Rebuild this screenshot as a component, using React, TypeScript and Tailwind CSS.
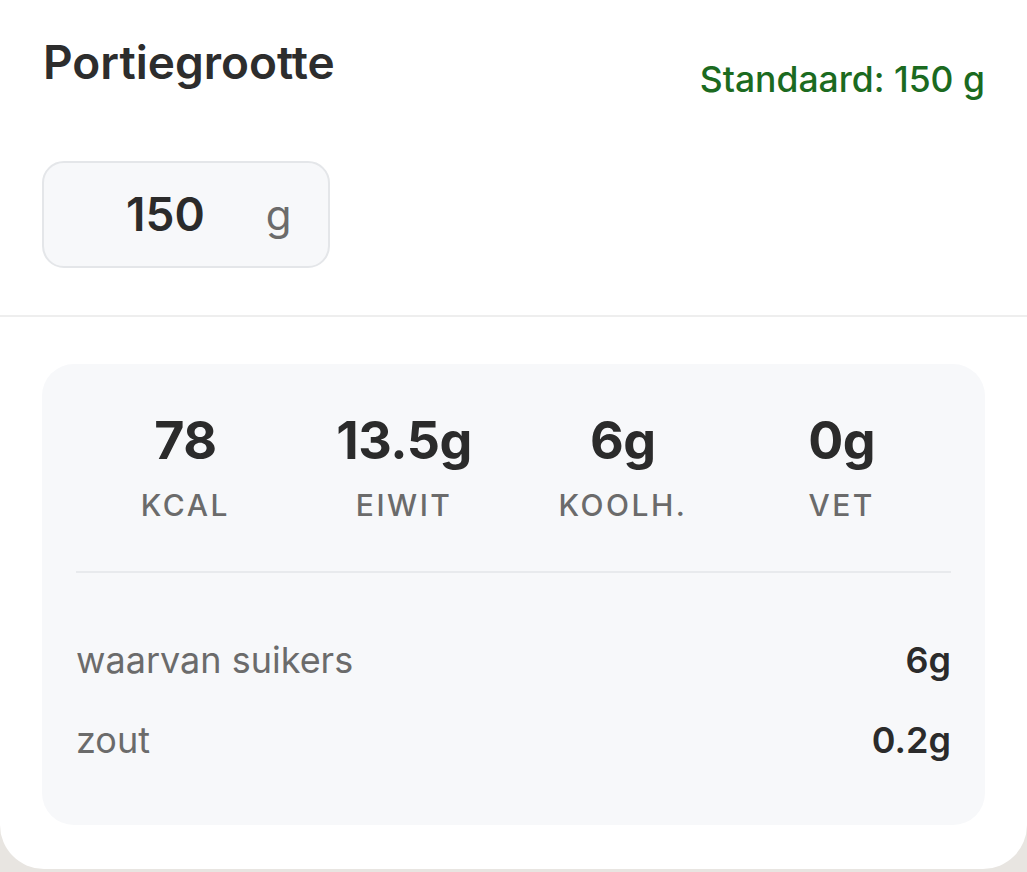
import React from "react";

const font = { fontFamily: "Inter, 'Noto Sans', sans-serif" };

function Macro({ value, label }: { value: string; label: string }) {
  return (
    <div className="flex flex-col items-center">
      <div className="text-[52px] leading-[56px] font-bold text-[#2b2b2b] tracking-[-0.5px]">{value}</div>
      <div className="mt-[18px] text-[30px] leading-[36px] font-medium tracking-[2.5px] text-[#6b6b6b]">{label}</div>
    </div>
  );
}

export default function App() {
  return (
    <div className="h-[872px] w-[1027px] bg-[#e8e5e1] overflow-hidden" style={font}>
      <div className="h-[869px] bg-white rounded-b-[44px] flex flex-col">
        <div className="flex items-start justify-between pl-[43px] pr-[42px] pt-[36px]">
          <div className="text-[46px] leading-[52px] font-semibold text-[#2d2d2d]">Portiegrootte</div>
          <div className="mt-[23px] text-[35.5px] leading-[42px] font-medium text-[#1b6a20]">Standaard: 150 g</div>
        </div>
        <div className="pl-[42px] mt-[60px]">
          <div className="w-[288px] h-[107px] rounded-[22px] border-2 border-[#e4e6e9] bg-[#f7f8fa] flex items-center pl-[82px]">
            <span className="text-[46px] font-semibold text-[#2b2b2b]">150</span>
            <span className="ml-[61px] text-[42px] text-[#6b6b6b]">g</span>
          </div>
        </div>
        <div className="mt-[47px] border-t-2 border-[#eeeeee]" />
        <div className="mx-[42px] mt-[47px] rounded-[32px] bg-[#f7f8fa] px-[34px] pt-[49px] pb-[63px]">
          <div className="grid grid-cols-4">
            <Macro value="78" label="KCAL" />
            <Macro value="13.5g" label="EIWIT" />
            <Macro value="6g" label="KOOLH." />
            <Macro value="0g" label="VET" />
          </div>
          <div className="mt-[48px] border-t-2 border-[#e8eaed]" />
          <div className="mt-[65px] flex items-center justify-between text-[36px] leading-[44px]">
            <span className="text-[#6b6b6b]">waarvan suikers</span>
            <span className="font-semibold text-[#2b2b2b]">6g</span>
          </div>
          <div className="mt-[36px] flex items-center justify-between text-[36px] leading-[44px]">
            <span className="text-[#6b6b6b]">zout</span>
            <span className="font-semibold text-[#2b2b2b]">0.2g</span>
          </div>
        </div>
      </div>
    </div>
  );
}
